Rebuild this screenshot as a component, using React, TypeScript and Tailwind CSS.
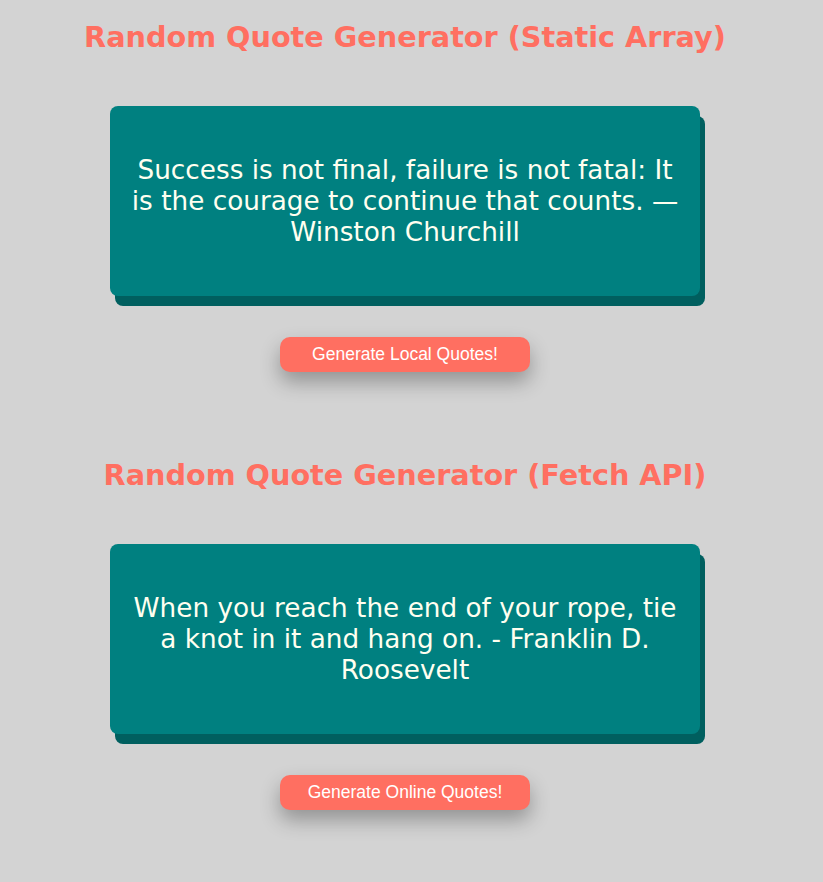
import React from 'react';

interface QuoteSectionProps {
  title: string;
  quote: string;
  buttonLabel: string;
  first?: boolean;
}

const QuoteSection: React.FC<QuoteSectionProps> = ({ title, quote, buttonLabel, first }) => {
  return (
    <section className={`flex flex-col items-center ${first ? 'pt-[16px]' : 'pt-[82px]'}`}>
      <h1 className="text-[28.7px] leading-[42px] font-bold text-[#ff6f61] [font-family:'DejaVu_Sans',sans-serif]">
        {title}
      </h1>

      {/* Quote card with hard offset shadow */}
      <div className="mt-[48px] w-[590px] h-[190px] rounded-[8px] bg-[#008080] shadow-[5px_10px_0_#005f5f] flex items-center justify-center px-[16px]">
        <p className="text-center text-[26.3px] leading-[31px] text-[#fffff0] [font-family:'DejaVu_Sans',sans-serif]">
          {quote}
        </p>
      </div>

      <button className="mt-[41px] w-[250px] h-[35px] rounded-[10px] bg-[#ff6f61] text-white text-[17.5px] [font-family:'Liberation_Sans',Arial,sans-serif] shadow-[0_10px_20px_rgba(0,0,0,0.3)]">
        {buttonLabel}
      </button>
    </section>
  );
};

export default function App() {
  return (
    <div className="min-h-screen bg-[#d3d3d3]">
      <div className="w-[810px]">
        <QuoteSection
          first
          title="Random Quote Generator (Static Array)"
          quote="Success is not final, failure is not fatal: It is the courage to continue that counts. — Winston Churchill"
          buttonLabel="Generate Local Quotes!"
        />
        <QuoteSection
          title="Random Quote Generator (Fetch API)"
          quote="When you reach the end of your rope, tie a knot in it and hang on. - Franklin D. Roosevelt"
          buttonLabel="Generate Online Quotes!"
        />
      </div>
    </div>
  );
}
